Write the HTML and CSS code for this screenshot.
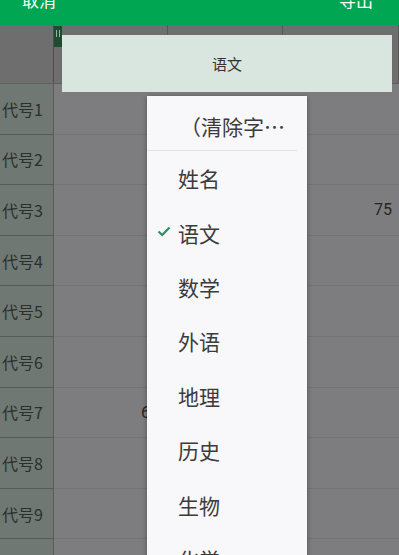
FILE: index.html
```html
<!DOCTYPE html>
<html lang="zh-CN">
<head>
    <meta charset="UTF-8">
    <meta name="viewport" content="width=device-width, initial-scale=1.0">
    <title>筛选</title>
    <link rel="stylesheet" href="styles.css">
</head>
<body>
    <div class="topbar">
        <span class="top-btn">取消</span>
        <span class="top-btn">导出</span>
    </div>

    <div class="sheet">
        <div class="row head">
            <div class="cell label"></div>
            <div class="cell col1"></div>
            <div class="cell col2"></div>
            <div class="cell col3"></div>
        </div>
        <div class="row"><div class="cell label">代号1</div><div class="cell col1"></div><div class="cell col2"></div><div class="cell col3"></div></div>
        <div class="row"><div class="cell label">代号2</div><div class="cell col1"></div><div class="cell col2"></div><div class="cell col3"></div></div>
        <div class="row"><div class="cell label">代号3</div><div class="cell col1"></div><div class="cell col2"></div><div class="cell col3">75</div></div>
        <div class="row"><div class="cell label">代号4</div><div class="cell col1"></div><div class="cell col2"></div><div class="cell col3"></div></div>
        <div class="row"><div class="cell label">代号5</div><div class="cell col1"></div><div class="cell col2"></div><div class="cell col3"></div></div>
        <div class="row"><div class="cell label">代号6</div><div class="cell col1"></div><div class="cell col2"></div><div class="cell col3"></div></div>
        <div class="row"><div class="cell label">代号7</div><div class="cell col1">65</div><div class="cell col2"></div><div class="cell col3"></div></div>
        <div class="row"><div class="cell label">代号8</div><div class="cell col1"></div><div class="cell col2"></div><div class="cell col3"></div></div>
        <div class="row"><div class="cell label">代号9</div><div class="cell col1"></div><div class="cell col2"></div><div class="cell col3"></div></div>
        <div class="row"><div class="cell label">代号10</div><div class="cell col1"></div><div class="cell col2"></div><div class="cell col3"></div></div>

        <div class="handle"><i></i><i></i></div>
        <div class="field-head">语文</div>

        <div class="menu">
            <div class="menu-item first">（清除字…</div>
            <div class="menu-item">姓名</div>
            <div class="menu-item checked">
                <svg class="check" width="14" height="11" viewBox="0 0 14 11"><path d="M1.5 5.5 L5.2 9 L12.5 1.5" fill="none" stroke="#2f8c62" stroke-width="2.2"/></svg>
                语文
            </div>
            <div class="menu-item">数学</div>
            <div class="menu-item">外语</div>
            <div class="menu-item">地理</div>
            <div class="menu-item">历史</div>
            <div class="menu-item">生物</div>
            <div class="menu-item">化学</div>
        </div>
    </div>
</body>
</html>
```

FILE: styles.css
```css
body {
    margin: 0;
    width: 399px;
    height: 555px;
    overflow: hidden;
    background-color: #7d7c7e;
    font-family: "Noto Sans CJK SC", "Noto Sans", sans-serif;
}
.topbar {
    height: 52px;
    margin-top: -27px;
    background-color: #00a651;
    display: flex;
    align-items: center;
    justify-content: space-between;
    padding: 0 26px 0 22px;
}
.top-btn {
    color: #fff;
    font-size: 17px;
}
.sheet {
    position: relative;
    height: 530px;
    overflow: hidden;
}
.row {
    display: flex;
    height: 49.6px;
    border-bottom: 1px solid #747375;
}
.row.head {
    height: 58px;
    background-color: #6e6e6e;
    border-bottom: 1px solid #5e5e5e;
}
.cell {
    box-sizing: border-box;
    display: flex;
    align-items: center;
    justify-content: flex-end;
    font-family: "Roboto", "Noto Sans CJK SC", sans-serif;
    font-size: 16px;
    color: #262626;
    white-space: nowrap;
}
.label {
    width: 54px;
    flex: none;
    padding-right: 10px;
    background-color: #6f7873;
    border-right: 1px solid #535b56;
    font-family: "Noto Sans CJK SC", sans-serif;
    font-size: 16px;
    color: #2a302c;
    overflow: hidden;
}
.row:not(.head) .label {
    box-shadow: 0 1px 0 #545c57;
}
.col1 {
    width: 114px;
    padding-right: 9px;
    border-left: 1px solid #827b80;
}
.col2 {
    width: 115px;
}
.col3 {
    flex: 1;
    padding-right: 7px;
}
.head .cell {
    background-color: #6e6e6e;
    border-right: 1px solid #585858;
}
.head .label {
    border-right: 1px solid #4e4e4e;
}
.head .col1 {
    border-left: none;
}
.handle {
    position: absolute;
    left: 54px;
    top: 1px;
    width: 8px;
    height: 21px;
    background-color: #1f4b31;
    display: flex;
    gap: 2px;
    padding: 4px 0 0 2px;
    box-sizing: border-box;
}
.handle i {
    width: 1px;
    height: 7px;
    background-color: #8fb89e;
}
.field-head {
    position: absolute;
    left: 62px;
    top: 10px;
    width: 330px;
    height: 57px;
    background-color: #d9e6df;
    display: flex;
    align-items: center;
    justify-content: center;
    font-size: 15px;
    color: #333;
}
.menu {
    position: absolute;
    left: 147px;
    top: 71px;
    width: 160px;
    height: 520px;
    background-color: #f8f7fa;
    box-shadow: 0 1px 5px rgba(0, 0, 0, 0.35);
}
.menu-item {
    position: relative;
    height: 54.4px;
    display: flex;
    align-items: center;
    padding-left: 31px;
    font-size: 21px;
    color: #3b3b3b;
    white-space: nowrap;
}
.menu-item.first {
    height: 55px;
    box-sizing: border-box;
    padding-top: 6px;
    padding-left: 33px;
    border-bottom: 1px solid #e3e2e6;
    margin-right: 10px;
}
.check {
    position: absolute;
    left: 10px;
    top: 21px;
}
```
